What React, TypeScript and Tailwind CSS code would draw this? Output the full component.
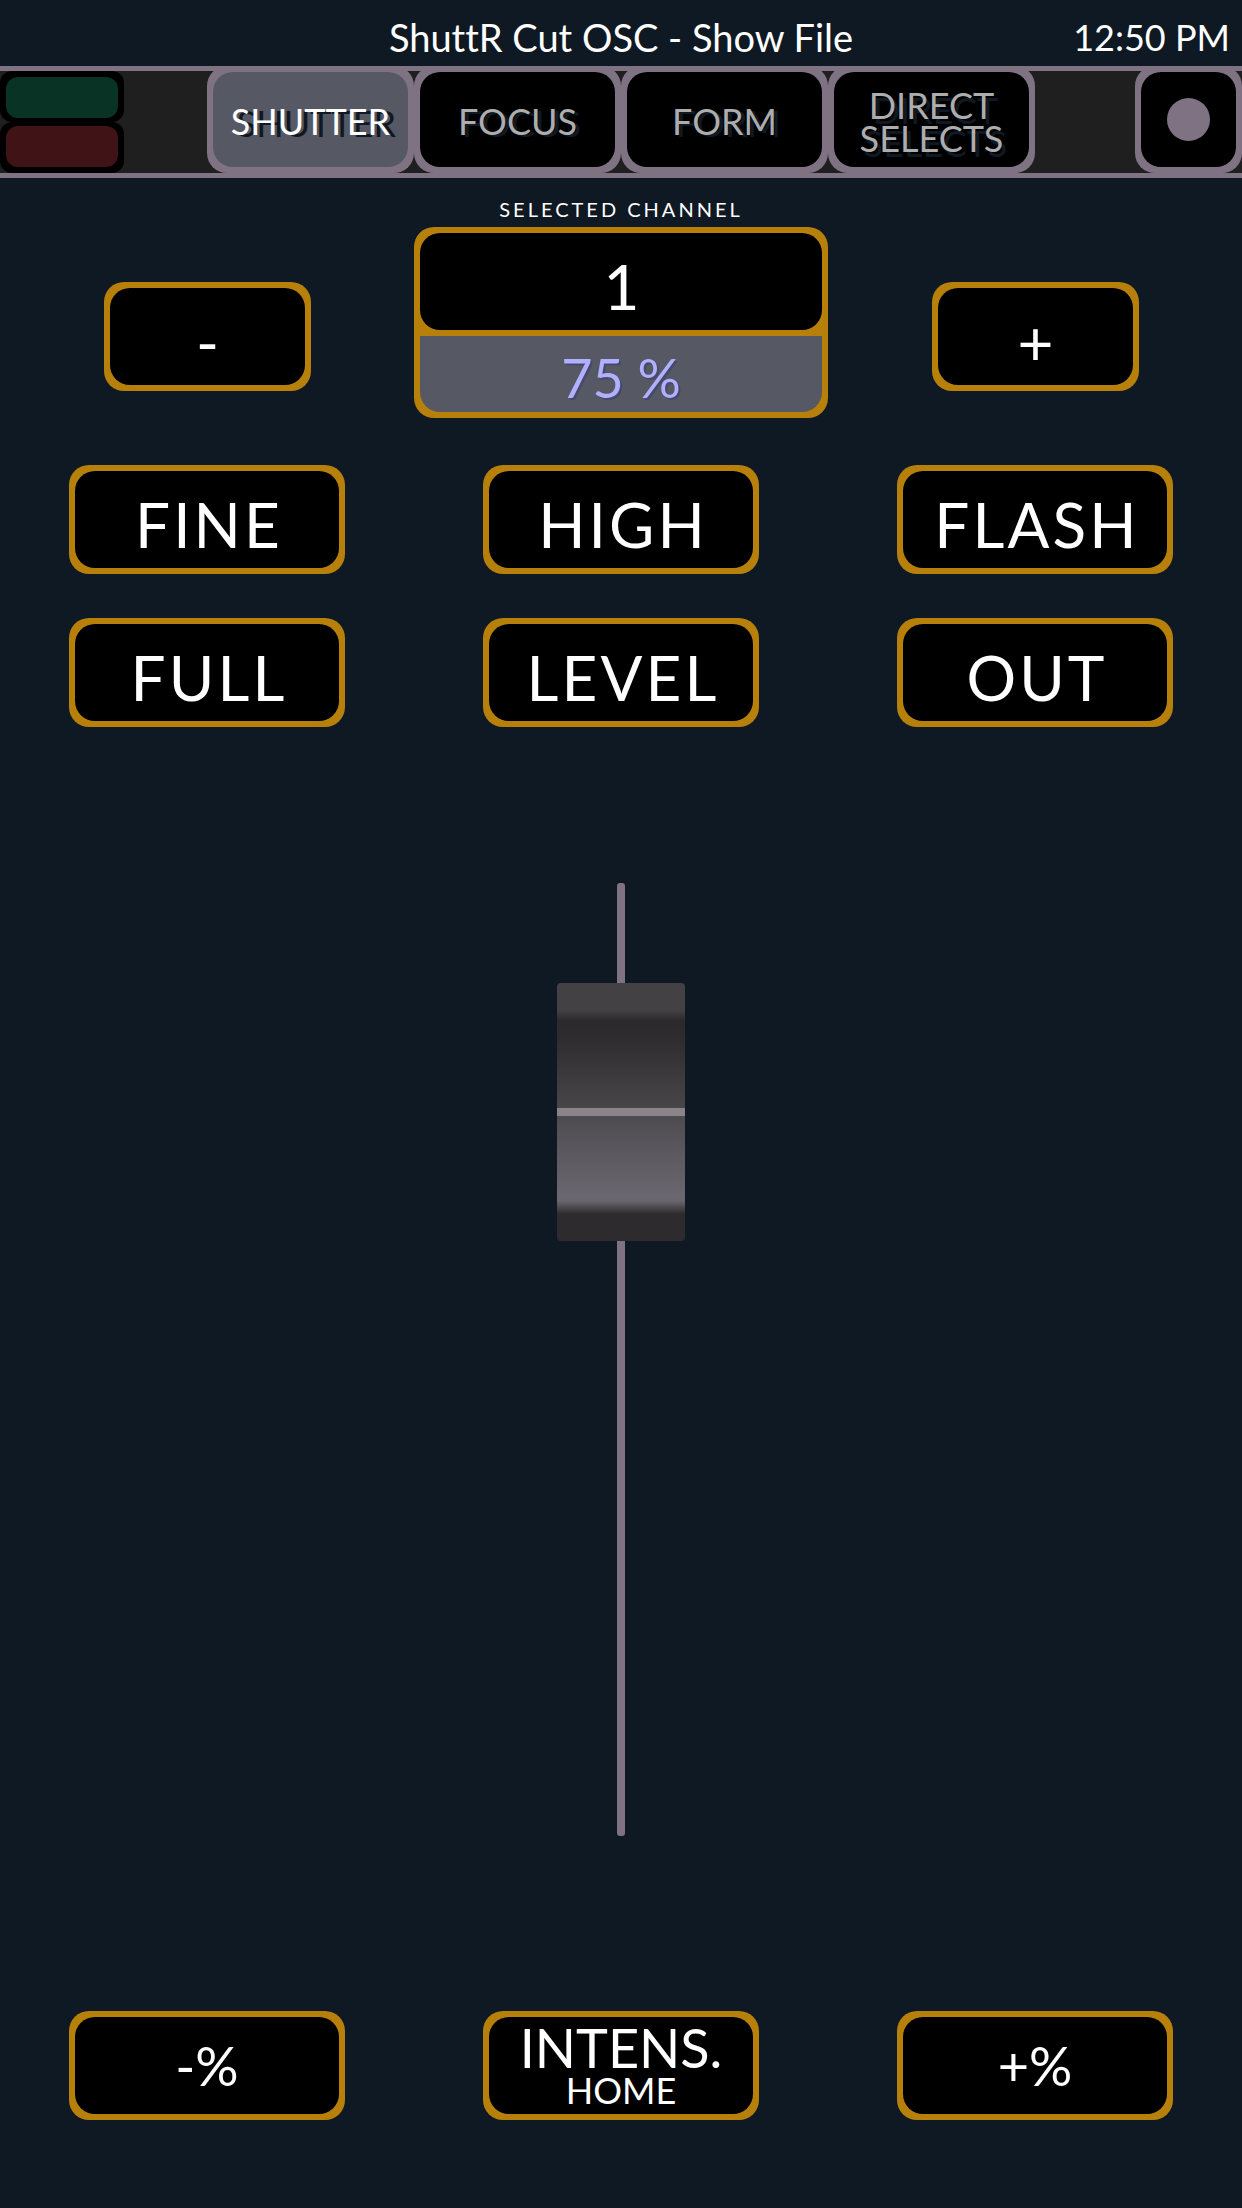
import { useState } from "react";
import type { ReactNode } from "react";

const TABS: { id: string; lines: string[]; shadow: string }[] = [
  { id: "shutter", lines: ["SHUTTER"], shadow: "[text-shadow:6px_2px_0_#0f1923]" },
  { id: "focus", lines: ["FOCUS"], shadow: "[text-shadow:4px_2px_0_#0f1923]" },
  { id: "form", lines: ["FORM"], shadow: "[text-shadow:4px_2px_0_#0f1923]" },
  { id: "direct", lines: ["DIRECT", "SELECTS"], shadow: "[text-shadow:4px_5px_0_#0f1923]" },
];

function GoldButton({ children, width = "w-2/3", label }: { children: ReactNode; width?: string; label?: string }) {
  return (
    <button type="button" aria-label={label} className={`${width} h-[109px] rounded-[20px] bg-[#b7800b] p-1.5`}>
      <span className="flex h-full flex-col items-center justify-center rounded-[20px] bg-black whitespace-nowrap">
        {children}
      </span>
    </button>
  );
}

function BigLabel({ children }: { children: ReactNode }) {
  return <span className="pt-2 pl-1 text-[62px] leading-none tracking-wider">{children}</span>;
}

export default function App() {
  const [active, setActive] = useState("shutter");
  const [level, setLevel] = useState(76);

  return (
    <div className="flex min-h-screen flex-col bg-[#0f1923] font-['Lato',sans-serif] text-white [font-variant-ligatures:none]">
      <header className="grid h-[66px] grid-cols-[1fr_auto_1fr] items-center pt-2 leading-none">
        <h1 className="col-start-2 text-[38px]">ShuttR Cut OSC - Show File</h1>
        <time className="pr-3 text-right text-[36px]">12:50 PM</time>
      </header>

      <nav className="grid h-28 grid-cols-6 border-y-[5px] border-[#7f7383] bg-[#1f1f1f]">
        <div className="flex w-[60%] flex-col">
          <button type="button" aria-label="Connected" className="flex-1 rounded-xl bg-black px-1.5 pt-1.5 pb-1">
            <span className="block h-full rounded-xl bg-[#083325]" />
          </button>
          <button type="button" aria-label="Disconnected" className="flex-1 rounded-xl bg-black px-1.5 pt-1 pb-1.5">
            <span className="block h-full rounded-xl bg-[#401316]" />
          </button>
        </div>
        {TABS.map((tab) => {
          const on = tab.id === active;
          return (
            <button
              key={tab.id}
              type="button"
              aria-pressed={on}
              onClick={() => setActive(tab.id)}
              className="-mt-[5px] rounded-[20px] bg-[#7f7383] p-1.5"
            >
              <span
                className={`flex h-full flex-col items-center justify-center rounded-[20px] pt-1 text-[36px] leading-[33px] ${tab.shadow} ${
                  on ? "bg-[#565963] text-white" : "bg-black text-[#adadad]"
                }`}
              >
                {tab.lines.map((line) => (
                  <span key={line}>{line}</span>
                ))}
              </span>
            </button>
          );
        })}
        <button
          type="button"
          aria-label="Menu"
          className="-mt-[5px] w-[107px] justify-self-end rounded-[20px] bg-[#7f7383] p-1.5"
        >
          <span className="flex h-full items-center justify-center rounded-[20px] bg-black">
            <span className="size-[43px] rounded-full bg-[#7f7383]" />
          </span>
        </button>
      </nav>

      <main className="flex flex-1 flex-col pb-[88px]">
        <p className="pt-[18px] pb-1 text-center text-xl leading-[27px] tracking-[3px]">SELECTED CHANNEL</p>

        <div className="grid grid-cols-3 items-start justify-items-center">
          <div className="flex w-full justify-center pt-[55px]">
            <GoldButton width="w-1/2" label="Previous channel">
              <BigLabel>-</BigLabel>
            </GoldButton>
          </div>
          <div className="w-full rounded-[20px] bg-[#b7800b]">
            <button type="button" className="block h-[109px] w-full p-1.5">
              <span className="flex h-full items-center justify-center rounded-[20px] bg-black">
                <BigLabel>1</BigLabel>
              </span>
            </button>
            <div className="-mt-1.5 px-1.5 pb-1.5">
              <div className="overflow-hidden rounded-b-[20px] bg-[#565963]">
                <div className="-mx-1.5 h-1.5 rounded-b-[20px] bg-[#b7800b]" />
                <p className="flex h-[76px] items-center justify-center pt-2 text-[54px] leading-none text-[#b0b0ff] [text-shadow:2px_2px_0_#48486c]">
                  75 %
                </p>
              </div>
            </div>
          </div>
          <div className="flex w-full justify-center pt-[55px]">
            <GoldButton width="w-1/2" label="Next channel">
              <BigLabel>+</BigLabel>
            </GoldButton>
          </div>
        </div>

        <div className="mt-[47px] grid grid-cols-3 justify-items-center gap-y-11">
          {["FINE", "HIGH", "FLASH", "FULL", "LEVEL", "OUT"].map((name) => (
            <GoldButton key={name}>
              <BigLabel>{name}</BigLabel>
            </GoldButton>
          ))}
        </div>

        <div className="mt-[27px] mb-[46px] grid flex-1 justify-items-center">
          <span className="col-start-1 row-start-1 my-[129px] w-2 rounded-[3px] bg-[#7f7383]" />
          <input
            type="range"
            min={0}
            max={100}
            value={level}
            onChange={(e) => setLevel(Number(e.target.value))}
            aria-label="Intensity"
            className="col-start-1 row-start-1 h-full min-h-[600px] w-32 appearance-none bg-transparent [direction:rtl] [writing-mode:vertical-lr] [&::-webkit-slider-thumb]:h-[258px] [&::-webkit-slider-thumb]:w-32 [&::-webkit-slider-thumb]:appearance-none [&::-webkit-slider-thumb]:rounded [&::-webkit-slider-thumb]:bg-[linear-gradient(180deg,#434143_0px,#434143_27px,#2b292c_38px,#2e2c2f_55px,#49464a_125px,#8a8389_125px,#8a8389_133px,#4e4b50_133px,#6a6770_214px,#68656c_218px,#2e2b2e_231px,#2e2b2e_258px)]"
          />
        </div>

        <div className="grid grid-cols-3 justify-items-center">
          <GoldButton>
            <span className="text-[54px] leading-none">-%</span>
          </GoldButton>
          <GoldButton>
            <span className="text-[54px] leading-[48px]">INTENS.</span>
            <span className="text-[36px] leading-9">HOME</span>
          </GoldButton>
          <GoldButton>
            <span className="text-[54px] leading-none">+%</span>
          </GoldButton>
        </div>
      </main>
    </div>
  );
}
